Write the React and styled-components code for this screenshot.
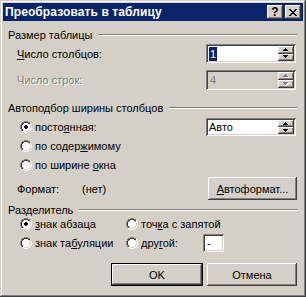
import React from "react";
import styled, { createGlobalStyle } from "styled-components";

const FACE = "#d4d0c8";
const SHADOW = "#808080";
const DARK = "#404040";
const LIGHT = "#ffffff";
const NAVY = "#0a246a";

const raised = `inset -1px -1px ${DARK}, inset 1px 1px ${LIGHT}, inset -2px -2px ${SHADOW}, inset 2px 2px ${FACE}`;
const sunken = `inset 1px 1px ${SHADOW}, inset -1px -1px ${LIGHT}, inset 2px 2px ${DARK}, inset -2px -2px ${FACE}`;

const GlobalStyle = createGlobalStyle`
  html, body { margin: 0; padding: 0; background: ${FACE}; }
  body {
    font-family: "Liberation Sans", Arial, sans-serif;
    font-size: 11px;
    color: #000;
  }
  #root { width: 306px; height: 297px; }
`;

const Window = styled.div`
  width: 306px;
  height: 297px;
  box-sizing: border-box;
  padding: 3px;
  background: ${FACE};
  box-shadow: inset -1px -1px ${DARK}, inset 1px 1px ${FACE}, inset -2px -2px ${SHADOW}, inset 2px 2px ${LIGHT};
  display: flex;
  flex-direction: column;
`;

const TitleBar = styled.div`
  height: 18px;
  background: ${NAVY};
  display: flex;
  align-items: center;
  padding: 0 2px 0 2px;
`;

const Title = styled.span`
  flex: 1;
  color: #fff;
  font-weight: bold;
  font-size: 12px;
  letter-spacing: 0.1px;
`;

const CaptionButton = styled.div`
  width: 16px;
  height: 14px;
  background: ${FACE};
  box-shadow: ${raised};
  display: flex;
  align-items: center;
  justify-content: center;
  font-weight: bold;
  font-size: 12px;
  line-height: 14px;
  & + & { margin-left: 2px; }
`;

const Body = styled.div`
  flex: 1;
  display: flex;
  flex-direction: column;
  padding: 0 6px 0 5px;
`;

const GroupHeader = styled.div`
  display: flex;
  align-items: center;
  height: 13px;
  margin-top: ${(p) => p.$top}px;
`;

const GroupLine = styled.div`
  flex: 1;
  height: 0;
  border-top: 1px solid ${SHADOW};
  border-bottom: 1px solid ${LIGHT};
  margin-left: 6px;
`;

const Row = styled.div`
  display: flex;
  align-items: center;
  height: ${(p) => p.$h}px;
  margin-top: ${(p) => p.$top}px;
  padding-left: ${(p) => p.$indent ?? 9}px;
`;

const Label = styled.span`
  flex: ${(p) => (p.$grow ? 1 : "none")};
  width: ${(p) => (p.$w ? `${p.$w}px` : "auto")};
  color: ${(p) => (p.$disabled ? SHADOW : "#000")};
  text-shadow: ${(p) => (p.$disabled ? `1px 1px ${LIGHT}` : "none")};
  white-space: nowrap;
`;

const U = styled.span`
  text-decoration: underline;
`;

const SpinField = styled.div`
  width: 90px;
  height: ${(p) => p.$h}px;
  box-sizing: border-box;
  padding: 2px;
  margin-right: 1px;
  background: ${(p) => (p.$disabled ? FACE : "#fff")};
  box-shadow: ${sunken};
  display: flex;
`;

const SpinText = styled.div`
  flex: 1;
  display: flex;
  align-items: center;
  padding-left: ${(p) => p.$pad ?? 2}px;
  color: ${(p) => (p.$disabled ? SHADOW : "#000")};
`;

const Selected = styled.span`
  background: ${NAVY};
  color: #fff;
  line-height: 14px;
  padding: 0 1px;
`;

const SpinButtons = styled.div`
  width: 16px;
  display: flex;
  flex-direction: column;
`;

const SpinButton = styled.div`
  flex: 1;
  background: ${FACE};
  box-shadow: ${raised};
  display: flex;
  align-items: center;
  justify-content: center;
`;

const RadioLabel = styled.div`
  display: flex;
  align-items: center;
  gap: 3px;
  white-space: nowrap;
`;

const Spacer = styled.div`
  flex: 1;
`;

const PushButton = styled.div`
  width: ${(p) => p.$w}px;
  height: 23px;
  box-sizing: border-box;
  background: ${FACE};
  border: ${(p) => (p.$default ? "1px solid #000" : "none")};
  box-shadow: ${raised};
  display: flex;
  align-items: center;
  justify-content: center;
  margin-right: ${(p) => p.$mr ?? 0}px;
`;

const SepGrid = styled.div`
  display: grid;
  grid-template-columns: 106px 98px;
  grid-template-rows: 14px 18px;
  row-gap: 3px;
  margin-top: 1px;
  padding-left: 12px;
  align-items: center;
`;

const OtherCell = styled.div`
  display: flex;
  align-items: center;
  justify-content: space-between;
`;

const SmallInput = styled.div`
  width: 21px;
  height: 18px;
  box-sizing: border-box;
  background: #fff;
  box-shadow: ${sunken};
  display: flex;
  align-items: center;
  padding-left: 4px;
`;

const ButtonRow = styled.div`
  display: flex;
  justify-content: flex-end;
  gap: 4px;
  margin-top: 11px;
`;

function Pixels({ w, h, pts, style }) {
  return (
    <svg width={w} height={h} viewBox={`0 0 ${w} ${h}`} shapeRendering="crispEdges" style={style}>
      {pts.map(([x, y, c], i) => (
        <rect key={i} x={x} y={y} width="1" height="1" fill={c} />
      ))}
    </svg>
  );
}

function buildRadio(checked) {
  const pts = [];
  const outer = {
    0: [4, 5, 6, 7], 1: [2, 3, 8, 9], 2: [1, 10], 3: [1, 10],
    4: [0, 11], 5: [0, 11], 6: [0, 11], 7: [0, 11],
    8: [1, 10], 9: [1, 10], 10: [2, 3, 8, 9], 11: [4, 5, 6, 7],
  };
  const inner = {
    1: [4, 5, 6, 7], 2: [2, 3, 8, 9], 3: [2, 9],
    4: [1, 10], 5: [1, 10], 6: [1, 10], 7: [1, 10],
    8: [2, 9], 9: [2, 3, 8, 9], 10: [4, 5, 6, 7],
  };
  const fill = {
    2: [4, 7], 3: [3, 8], 4: [2, 9], 5: [2, 9], 6: [2, 9], 7: [2, 9], 8: [3, 8], 9: [4, 7],
  };
  Object.entries(outer).forEach(([y, xs]) =>
    xs.forEach((x) => pts.push([x, +y, x + +y <= 11 ? SHADOW : LIGHT]))
  );
  Object.entries(inner).forEach(([y, xs]) =>
    xs.forEach((x) => pts.push([x, +y, x + +y <= 11 ? DARK : FACE]))
  );
  Object.entries(fill).forEach(([y, [a, b]]) => {
    for (let x = a; x <= b; x++) pts.push([x, +y, "#fff"]);
  });
  if (checked) {
    const dot = { 4: [5, 6], 5: [4, 5, 6, 7], 6: [4, 5, 6, 7], 7: [5, 6] };
    Object.entries(dot).forEach(([y, xs]) => xs.forEach((x) => pts.push([x, +y, "#000"])));
  }
  return pts;
}

function Radio({ checked, children }) {
  return (
    <RadioLabel>
      <Pixels w={12} h={12} pts={buildRadio(checked)} />
      <span>{children}</span>
    </RadioLabel>
  );
}

function Arrow({ up, color = "#000", shadow }) {
  const rows = up ? [[2, 2], [1, 3], [0, 4]] : [[0, 4], [1, 3], [2, 2]];
  const pts = [];
  if (shadow) {
    rows.forEach(([a, b], y) => {
      for (let x = a; x <= b; x++) pts.push([x + 1, y + 1, LIGHT]);
    });
  }
  rows.forEach(([a, b], y) => {
    for (let x = a; x <= b; x++) pts.push([x, y, color]);
  });
  return <Pixels w={6} h={4} pts={pts} />;
}

function Spin({ h, disabled, children, pad }) {
  return (
    <SpinField $h={h} $disabled={disabled}>
      <SpinText $disabled={disabled} $pad={pad}>{children}</SpinText>
      <SpinButtons>
        <SpinButton>
          <Arrow up color={disabled ? SHADOW : "#000"} shadow={disabled} />
        </SpinButton>
        <SpinButton>
          <Arrow color={disabled ? SHADOW : "#000"} shadow={disabled} />
        </SpinButton>
      </SpinButtons>
    </SpinField>
  );
}

function CloseGlyph() {
  const rows = [[0, 1, 6, 7], [1, 2, 5, 6], [2, 3, 4, 5], [3, 4], [2, 3, 4, 5], [1, 2, 5, 6], [0, 1, 6, 7]];
  const pts = [];
  rows.forEach((xs, y) => xs.forEach((x) => pts.push([x, y, "#000"])));
  return <Pixels w={8} h={7} pts={pts} />;
}

export default function App() {
  return (
    <>
      <GlobalStyle />
      <Window>
        <TitleBar>
          <Title>Преобразовать в таблицу</Title>
          <CaptionButton>?</CaptionButton>
          <CaptionButton>
            <CloseGlyph />
          </CaptionButton>
        </TitleBar>
        <Body>
          <GroupHeader $top={7}>
            <Label>Размер таблицы</Label>
            <GroupLine />
          </GroupHeader>
          <Row $h={19} $top={3}>
            <Label $grow>
              <U>Ч</U>исло столбцов:
            </Label>
            <Spin h={19} pad={1}>
              <Selected>1</Selected>
            </Spin>
          </Row>
          <Row $h={20} $top={7}>
            <Label $grow $disabled>
              Число строк:
            </Label>
            <Spin h={20} disabled>
              4
            </Spin>
          </Row>

          <GroupHeader $top={11}>
            <Label>Автоподбор ширины столбцов</Label>
            <GroupLine />
          </GroupHeader>
          <Row $h={18} $top={4} $indent={12}>
            <Radio checked>
              посто<U>я</U>нная:
            </Radio>
            <Spacer />
            <Spin h={18} pad={1}>
              Авто
            </Spin>
          </Row>
          <Row $h={14} $top={3} $indent={12}>
            <Radio>
              по содер<U>ж</U>имому
            </Radio>
          </Row>
          <Row $h={14} $top={5} $indent={12}>
            <Radio>
              по ширине <U>о</U>кна
            </Radio>
          </Row>
          <Row $h={23} $top={5}>
            <Label $w={65}>Формат:</Label>
            <Label $grow>(нет)</Label>
            <PushButton $w={89}>
              <span>
                <U>А</U>втоформат...
              </span>
            </PushButton>
          </Row>

          <GroupHeader $top={3}>
            <Label>Разделитель</Label>
            <GroupLine />
          </GroupHeader>
          <SepGrid>
            <Radio checked>
              <U>з</U>нак абзаца
            </Radio>
            <Radio>
              точ<U>к</U>а с запятой
            </Radio>
            <Radio>
              знак та<U>б</U>уляции
            </Radio>
            <OtherCell>
              <Radio>
                дру<U>г</U>ой:
              </Radio>
              <SmallInput>-</SmallInput>
            </OtherCell>
          </SepGrid>

          <ButtonRow>
            <PushButton $w={92} $default>
              OK
            </PushButton>
            <PushButton $w={90}>Отмена</PushButton>
          </ButtonRow>
        </Body>
      </Window>
    </>
  );
}
